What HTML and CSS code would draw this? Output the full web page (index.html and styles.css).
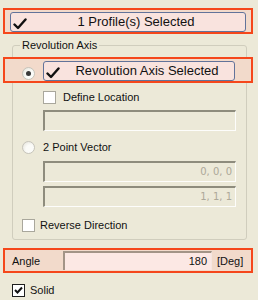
FILE: index.html
```html
<!DOCTYPE html>
<html lang="en">
<head>
  <meta charset="UTF-8" />
  <title>Revolve</title>
  <link rel="stylesheet" href="styles.css">
</head>
<body>
  <div class="panel">
    <div class="hl hl-top">
      <div class="sel-btn wide">
        <svg class="check" viewBox="0 0 14 12" width="14" height="12"><path d="M1.5 6.5 L5 10 L12.5 1.5" /></svg>
        <span class="sel-text">1 Profile(s) Selected</span>
      </div>
    </div>

    <fieldset class="group">
      <legend>Revolution Axis</legend>

      <div class="hl hl-axis">
        <span class="radio on"></span>
        <div class="sel-btn axis">
          <svg class="check" viewBox="0 0 14 12" width="14" height="12"><path d="M1.5 6.5 L5 10 L12.5 1.5" /></svg>
          <span class="sel-text">Revolution Axis Selected</span>
        </div>
      </div>

      <div class="row sub">
        <span class="box"></span>
        <span class="lbl gap7">Define Location</span>
      </div>
      <div class="field sub first"></div>

      <div class="row radio-row">
        <span class="radio"></span>
        <span class="lbl gap8">2 Point Vector</span>
      </div>
      <div class="field sub vec1">0, 0, 0</div>
      <div class="field sub vec2">1, 1, 1</div>

      <div class="row rev-row">
        <span class="box"></span>
        <span class="lbl gap5">Reverse Direction</span>
      </div>
    </fieldset>

    <div class="hl hl-angle">
      <span class="angle-lbl">Angle</span>
      <div class="angle-input">180</div>
      <span class="unit">[Deg]</span>
    </div>

    <div class="row solid-row">
      <span class="box checked">
        <svg viewBox="0 0 11 11" width="11" height="11"><path d="M2 5 L4.5 7.5 L9 2.5" /></svg>
      </span>
      <span class="lbl gap5">Solid</span>
    </div>
  </div>
</body>
</html>
```

FILE: styles.css
```css
body {
  margin: 0;
  background: #ece9d8;
  font-family: "Liberation Sans", Arial, sans-serif;
  font-size: 11px;
  color: #000;
}
.panel {
  width: 258px;
  height: 300px;
  padding-top: 8px;
  box-sizing: border-box;
  overflow: hidden;
}
.hl {
  display: flex;
  align-items: flex-start;
  box-sizing: border-box;
  border: 2px solid #f5471b;
  background: #f2dacb;
}
.hl-top {
  margin: 0 5px 0 3px;
  height: 26px;
  padding: 2px 5px 0 5px;
}
.sel-btn {
  display: flex;
  align-items: center;
  box-sizing: border-box;
  height: 20px;
  border: 1px solid #62739a;
  border-radius: 3px;
  background: #f9e3de;
}
.sel-btn.wide {
  flex: 1;
}
.check {
  margin-left: 2px;
  margin-top: 3px;
  flex: none;
}
.check path {
  fill: none;
  stroke: #111;
  stroke-width: 2.4;
  stroke-linecap: round;
  stroke-linejoin: round;
}
.sel-text {
  flex: 1;
  text-align: center;
  font-size: 13px;
  line-height: 18px;
  color: #111;
}
.group {
  margin: 5px 11px 0 12px;
  padding: 5px 0 7px 0;
  border: 1px solid #d0cdbd;
  border-radius: 3px;
  min-width: 0;
}
.group legend {
  margin-left: 7px;
  padding: 0 2px;
  line-height: 13px;
  color: #111;
}
.hl-axis {
  margin: 0 -7px 0 -10px;
  height: 26px;
  padding: 2px 0 0 17px;
}
.hl-axis .radio {
  margin-top: 6px;
}
.sel-btn.axis {
  width: 192px;
  margin-left: 8px;
}
.radio {
  display: inline-block;
  box-sizing: border-box;
  width: 13px;
  height: 13px;
  border-radius: 50%;
  border: 1px solid #c6c4bb;
  background: radial-gradient(circle at 65% 65%, #fbfbf8 40%, #e2e0d6);
  position: relative;
  flex: none;
}
.radio.on::after {
  content: "";
  position: absolute;
  left: 3px;
  top: 3px;
  width: 5px;
  height: 5px;
  border-radius: 50%;
  background: #3a3a3a;
}
.row {
  display: flex;
  align-items: center;
  height: 13px;
}
.sub {
  margin-left: 30px;
}
.row.sub {
  margin-top: 8px;
}
.box {
  display: inline-block;
  box-sizing: border-box;
  width: 13px;
  height: 13px;
  border: 1px solid #a9a79c;
  background: #fff;
  flex: none;
}
.box.checked {
  border-color: #1e1e1e;
}
.box svg {
  display: block;
  margin: 0;
}
.box svg path {
  fill: none;
  stroke: #111;
  stroke-width: 2;
}
.lbl {
  line-height: 13px;
  color: #111;
}
.gap5 { margin-left: 5px; }
.gap7 { margin-left: 7px; }
.gap8 { margin-left: 8px; }
.field {
  box-sizing: border-box;
  width: 193px;
  height: 21px;
  border-style: solid;
  border-width: 2px 1px 1px 2px;
  border-color: #8e8c7d #fdfdfb #fdfdfb #8e8c7d;
  background: #ece9d8;
  text-align: right;
  padding-right: 3px;
  line-height: 18px;
  color: #aca899;
  font-family: "DejaVu Sans", sans-serif;
  font-size: 10px;
}
.field.first {
  margin-top: 6px;
}
.radio-row {
  margin-top: 10px;
  padding-left: 9px;
}
.vec1 {
  margin-top: 7px;
}
.vec2 {
  margin-top: 4px;
}
.rev-row {
  margin-top: 12px;
  padding-left: 9px;
}
.hl-angle {
  margin: 8px 5px 0 3px;
  height: 25px;
  align-items: center;
  padding-left: 7px;
}
.angle-lbl {
  width: 51px;
  color: #111;
}
.angle-input {
  box-sizing: border-box;
  width: 149px;
  height: 19px;
  border-style: solid;
  border-width: 2px 1px 0 2px;
  border-color: #a39487 #f6e6e0 #f6e6e0 #a39487;
  background: #fce8e4;
  text-align: right;
  padding-right: 4px;
  line-height: 17px;
  color: #111;
}
.unit {
  margin-left: 5px;
  color: #111;
}
.solid-row {
  margin-top: 11px;
  padding-left: 12px;
}
```
